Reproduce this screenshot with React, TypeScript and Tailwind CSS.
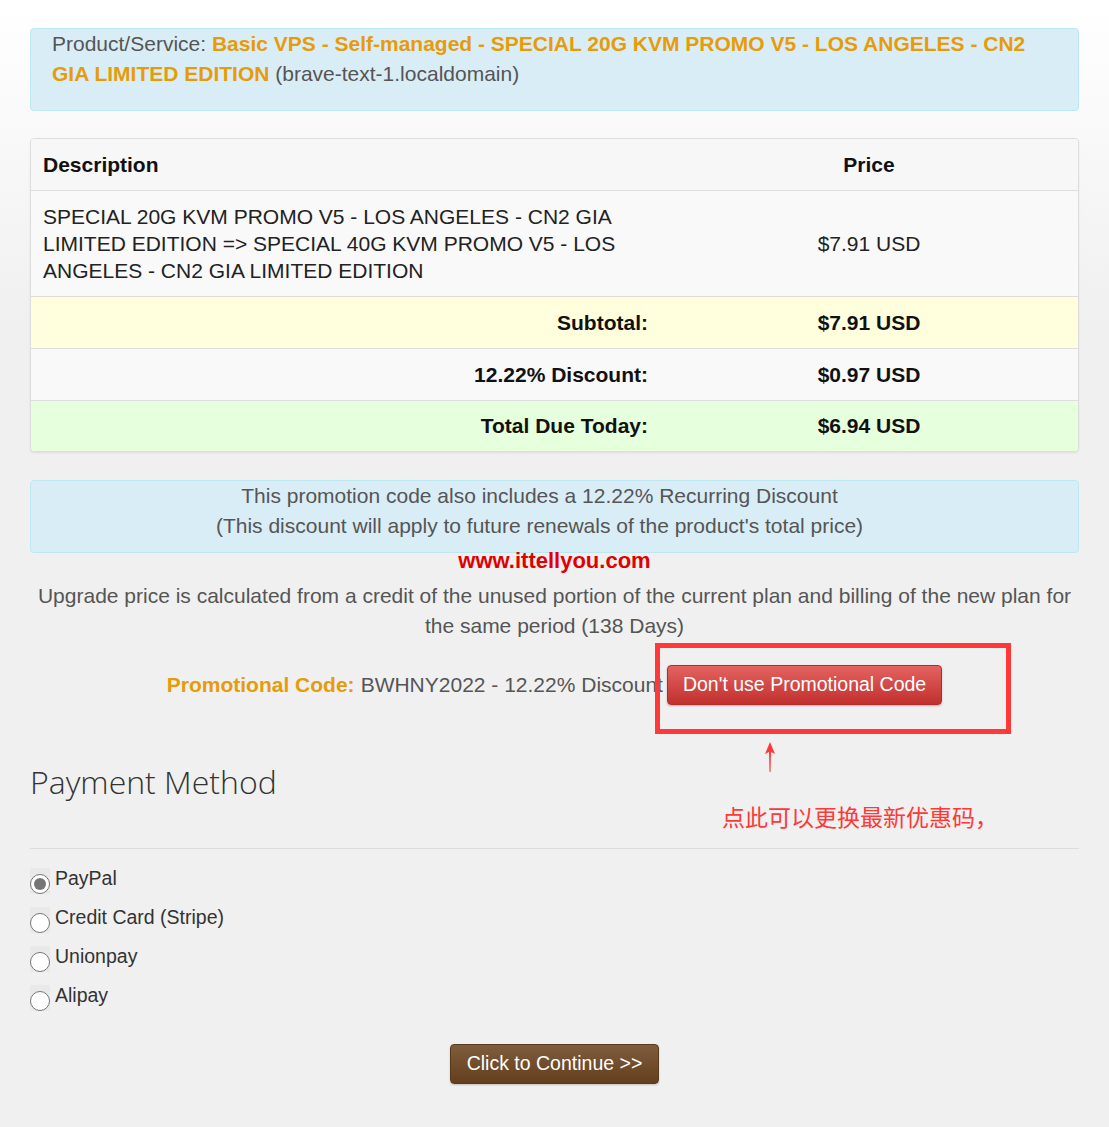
import React from 'react';

const sans = { fontFamily: '"Liberation Sans", Arial, sans-serif' };

const methods = [
  { id: 'paypal', label: 'PayPal', checked: true },
  { id: 'stripe', label: 'Credit Card (Stripe)', checked: false },
  { id: 'unionpay', label: 'Unionpay', checked: false },
  { id: 'alipay', label: 'Alipay', checked: false },
];

function Radio({ checked }: { checked: boolean }) {
  return (
    <span className="relative mt-[8px] flex h-[26px] w-[20px] shrink-0 items-end bg-[#e9e9e9]">
      <span className="flex h-[20px] w-[20px] items-center justify-center rounded-full border border-[#767676] bg-white">
        {checked && <span className="h-[12px] w-[12px] rounded-full bg-[#767676]" />}
      </span>
    </span>
  );
}

export default function App() {
  return (
    <div
      className="relative min-h-[1127px] w-full bg-[linear-gradient(180deg,#ffffff_0px,#f0f0f0_320px)] text-[21px]"
      style={sans}
    >
      <div className="px-[30px] pt-[28px]">
        {/* product alert */}
        <div className="rounded-[4px] border border-[#bce8f1] bg-[#d9edf7] pb-[21px] pl-[21px] pr-[20px] pt-0 leading-[30px] text-[#555]">
          Product/Service:{' '}
          <strong className="text-[#e69c0a]">
            Basic VPS - Self-managed - SPECIAL 20G KVM PROMO V5 - LOS ANGELES - CN2 GIA LIMITED EDITION
          </strong>{' '}
          (brave-text-1.localdomain)
        </div>

        {/* summary table */}
        <div className="mt-[27px] overflow-hidden rounded-[4px] border border-[#ddd] shadow-[0_1px_2px_rgba(0,0,0,0.08)]">
          <div className="flex h-[51px] items-center bg-[#f7f7f7] font-bold text-[#111]">
            <div className="w-[629px] pl-[12px]">Description</div>
            <div className="flex-1 text-center">Price</div>
          </div>
          <div className="flex items-center border-t border-[#ddd] bg-[#f9f9f9] py-[12px] leading-[27px] text-[#222]">
            <div className="w-[629px] pl-[12px] pr-[12px]">
              SPECIAL 20G KVM PROMO V5 - LOS ANGELES - CN2 GIA LIMITED EDITION =&gt; SPECIAL 40G KVM PROMO V5 - LOS
              ANGELES - CN2 GIA LIMITED EDITION
            </div>
            <div className="flex-1 text-center">$7.91 USD</div>
          </div>
          <div className="flex h-[52px] items-center border-t border-[#ddd] bg-[#ffffdd] font-bold text-[#111]">
            <div className="w-[629px] pr-[12px] text-right">Subtotal:</div>
            <div className="flex-1 text-center">$7.91 USD</div>
          </div>
          <div className="flex h-[52px] items-center border-t border-[#ddd] bg-[#f9f9f9] font-bold text-[#111]">
            <div className="w-[629px] pr-[12px] text-right">12.22% Discount:</div>
            <div className="flex-1 text-center">$0.97 USD</div>
          </div>
          <div className="flex h-[51px] items-center border-t border-[#ddd] bg-[#e6ffdd] font-bold text-[#111]">
            <div className="w-[629px] pr-[12px] text-right">Total Due Today:</div>
            <div className="flex-1 text-center">$6.94 USD</div>
          </div>
        </div>

        {/* recurring discount */}
        <div className="mt-[28px] rounded-[4px] border border-[#bce8f1] bg-[#d9edf7] pb-[11px] pr-[30px] text-center leading-[30px] text-[#555]">
          This promotion code also includes a 12.22% Recurring Discount
          <br />
          (This discount will apply to future renewals of the product's total price)
        </div>

        <div className="mt-[-4px] text-center text-[22px] font-bold leading-[24px] text-[#e00000]">www.ittellyou.com</div>

        <p className="mt-[8px] text-center leading-[30px] text-[#555]">
          Upgrade price is calculated from a credit of the unused portion of the current plan and billing of the new
          plan for the same period (138 Days)
        </p>

        {/* promo code */}
        <div className="mt-[24px] flex items-center justify-center">
          <span className="font-bold text-[#e69c0a]">Promotional Code:</span>
          <span className="ml-[6px] text-[#555]">BWHNY2022 - 12.22% Discount</span>
          <button className="ml-[4px] h-[40px] rounded-[4px] border border-[#b52b2b] bg-[linear-gradient(180deg,#e46360,#c0302e)] px-[15px] text-[19.5px] text-white shadow-[0_1px_2px_rgba(0,0,0,0.25)]">
            Don't use Promotional Code
          </button>
        </div>

        {/* payment method */}
        <h2
          className="mt-[56px] text-[32px] font-light leading-[42px] text-[#333]"
          style={{ fontFamily: '"Open Sans", "Liberation Sans", sans-serif' }}
        >
          Payment Method
        </h2>
        <div className="mt-[45px] border-t border-[#ddd]" />
        <div className="mt-[11px] flex flex-col text-[19.5px]">
          {methods.map((m) => (
            <label key={m.id} className="flex h-[39px] items-start gap-[5px] leading-[39px] text-[#333]">
              <Radio checked={m.checked} />
              <span className="-mt-[1px]">{m.label}</span>
            </label>
          ))}
        </div>

        <div className="mt-[28px] flex justify-center">
          <button className="h-[40px] rounded-[4px] border border-[#5a3a1c] bg-[linear-gradient(180deg,#7e5c3d,#643f1d)] px-[16px] text-[19.5px] text-white shadow-[0_1px_2px_rgba(0,0,0,0.2)]">
            Click to Continue &gt;&gt;
          </button>
        </div>
      </div>

      {/* annotations over the screenshot */}
      <div className="absolute left-[655px] top-[643px] h-[91px] w-[356px] border-[5px] border-[#ff3838]" />
      <svg className="absolute left-[764px] top-[742px]" width="12" height="30" viewBox="0 0 12 30">
        <path d="M6 0 L11 12 L7 10 L6.5 30 L5.5 30 L5 10 L1 12 Z" fill="#ff3838" />
      </svg>
      <div
        className="absolute left-[722px] top-[801px] text-[23px] leading-[30px] text-[#ff3838]"
        style={{ fontFamily: '"Noto Sans CJK SC", "Liberation Sans", sans-serif' }}
      >
        点此可以更换最新优惠码，
      </div>
    </div>
  );
}
